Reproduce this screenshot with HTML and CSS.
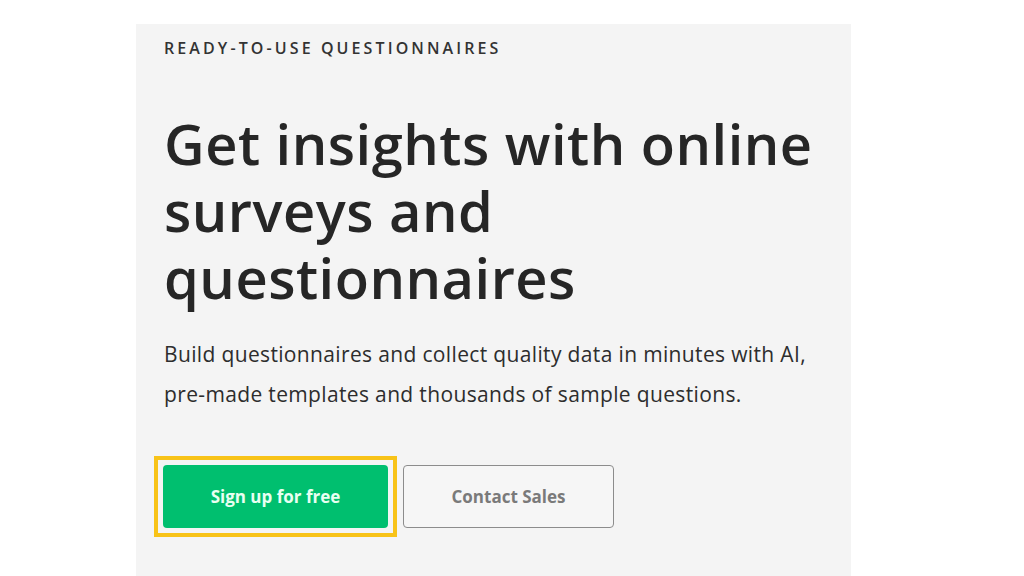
FILE: index.html
```html
<!DOCTYPE html>
<html lang="en">
<head>
<meta charset="utf-8">
<title>Online surveys and questionnaires</title>
<link rel="stylesheet" href="styles.css">
</head>
<body>
<main class="hero">
  <p class="eyebrow">READY-TO-USE QUESTIONNAIRES</p>
  <h1 class="title">Get insights with online surveys and questionnaires</h1>
  <p class="lead">Build questionnaires and collect quality data in minutes with AI, pre-made templates and thousands of sample questions.</p>
  <div class="actions">
    <a class="btn btn-primary" href="#">Sign up for free</a>
    <a class="btn btn-secondary" href="#">Contact Sales</a>
  </div>
</main>
</body>
</html>
```
FILE: styles.css
```css
html, body {
  margin: 0;
  padding: 0;
  background: #ffffff;
}
body {
  font-family: "Open Sans", "Liberation Sans", sans-serif;
  color: #2d2d2d;
  height: 576px;
  overflow: hidden;
}
.hero {
  box-sizing: border-box;
  margin: 24px 0 0 136px;
  width: 715px;
  height: 552px;
  background: #f4f4f4;
  padding: 14px 20px 0 28px;
}
.eyebrow {
  margin: 0;
  font-size: 16px;
  line-height: 20px;
  font-weight: 600;
  letter-spacing: 3.1px;
  color: #333;
}
.title {
  margin: 52px 0 0 0;
  font-size: 56px;
  line-height: 67px;
  font-weight: 600;
  color: #262626;
  letter-spacing: 0.5px;
}
.lead {
  margin: 23px 0 0 0;
  max-width: 660px;
  font-size: 21px;
  line-height: 40px;
  font-weight: 400;
  letter-spacing: 0.35px;
  color: #2d2d2d;
}
.actions {
  margin-top: 51px;
  display: flex;
  gap: 15px;
}
.btn {
  box-sizing: border-box;
  display: flex;
  align-items: center;
  justify-content: center;
  height: 63px;
  border-radius: 4px;
  font-size: 17px;
  font-weight: 700;
  text-decoration: none;
}
.btn-primary {
  position: relative;
  width: 225px;
  margin-left: -1px;
  background: #00bf6f;
  color: #e9fff2;
}
.btn-primary::after {
  content: "";
  position: absolute;
  inset: -9px;
  border: 4px solid #f8c318;
  pointer-events: none;
}
.btn-secondary {
  width: 211px;
  background: #f6f6f6;
  border: 1px solid #8c8c8c;
  color: #7a7a7a;
}
```
